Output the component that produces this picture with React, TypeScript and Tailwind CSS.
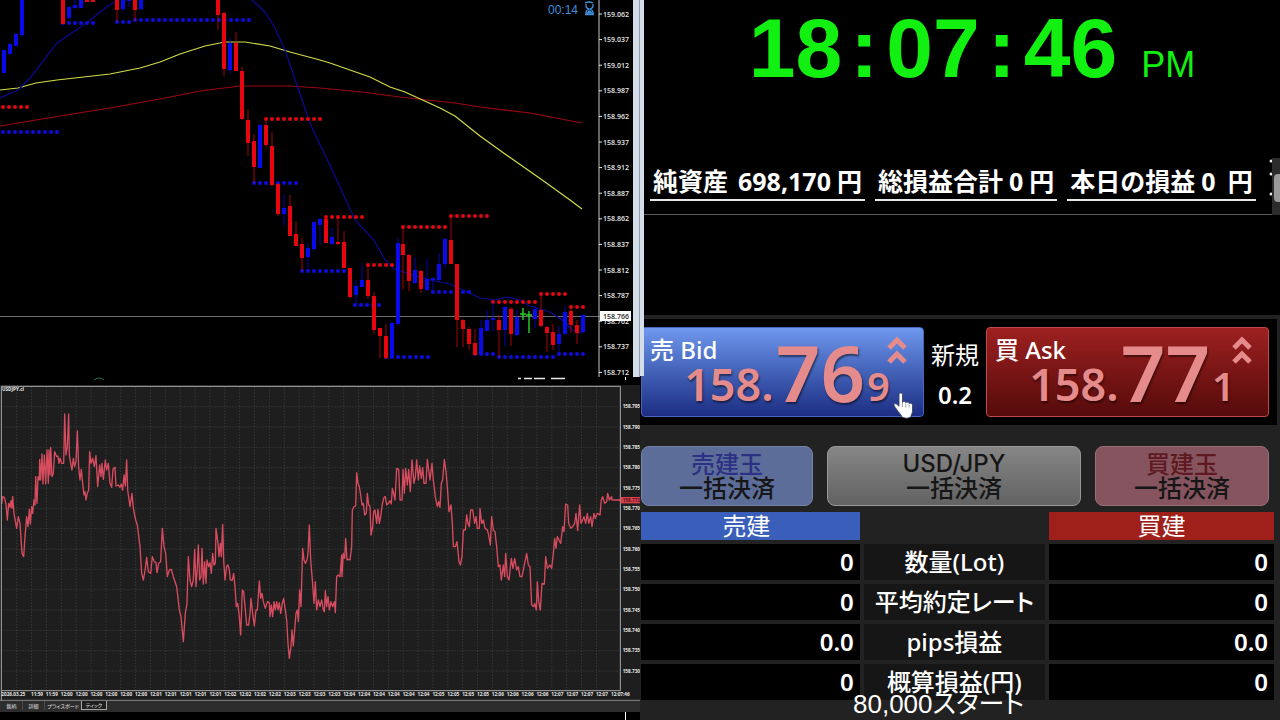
import type { ReactNode } from 'react'
import clsx from 'clsx'

// x, body top, body bottom, wick top, wick bottom
type Candle = [number, number, number, number, number]

const UP: Candle[] = [
  [4, 50, 73, 50, 73], [10, 44, 54, 43, 55], [16, 34, 46, 33, 46], [22, 0, 35, 0, 37],
  [69, 7, 18, 6, 19], [75, 5, 8, 0, 9], [81, 0, 8, 0, 8], [123, 0, 9, 0, 11], [129, 0, 1, 0, 7],
  [141, 0, 9, 0, 10], [230, 43, 70, 38, 74], [260, 125, 168, 124, 168], [284, 208, 214, 195, 226],
  [308, 248, 257, 242, 270], [314, 222, 249, 221, 250], [320, 219, 225, 218, 245],
  [332, 237, 244, 228, 245], [356, 286, 295, 280, 305], [362, 280, 287, 263, 287],
  [392, 323, 358, 322, 358], [398, 243, 324, 238, 326], [415, 270, 283, 257, 284],
  [427, 279, 290, 259, 291], [433, 278, 280, 277, 290], [439, 264, 280, 253, 282],
  [445, 239, 264, 238, 268], [481, 328, 355, 320, 356], [487, 320, 331, 310, 331],
  [493, 318, 320, 302, 331], [505, 307, 330, 306, 346], [517, 317, 335, 310, 336],
  [535, 309, 319, 306, 328], [559, 334, 344, 326, 353], [565, 312, 334, 306, 335],
  [583, 315, 332, 314, 333],
]

const DOWN: Candle[] = [
  [63, 0, 24, 0, 24], [87, 0, 2, 0, 2], [93, 0, 2, 0, 2], [117, 0, 10, 0, 22], [135, 0, 10, 0, 21],
  [218, 0, 15, 0, 30], [224, 13, 69, 12, 76], [236, 43, 71, 32, 71], [242, 71, 119, 67, 120],
  [248, 120, 143, 109, 156], [254, 141, 167, 134, 183], [266, 125, 145, 119, 147],
  [272, 146, 185, 132, 186], [278, 184, 214, 183, 216], [290, 206, 236, 195, 236],
  [296, 234, 246, 221, 246], [302, 244, 258, 238, 271], [326, 219, 243, 217, 243],
  [338, 242, 244, 217, 245], [344, 242, 268, 231, 268], [350, 268, 297, 268, 298],
  [368, 280, 296, 265, 299], [374, 296, 330, 292, 333], [380, 328, 336, 328, 358],
  [386, 336, 358, 324, 359], [403, 244, 255, 227, 289], [409, 255, 281, 254, 291],
  [421, 271, 289, 270, 293], [451, 240, 264, 216, 264], [457, 264, 320, 264, 347],
  [463, 320, 329, 319, 347], [469, 329, 344, 327, 350], [475, 343, 355, 329, 356],
  [499, 320, 330, 315, 357], [511, 309, 334, 307, 346], [541, 310, 326, 295, 327],
  [547, 327, 333, 326, 352], [553, 332, 345, 324, 350], [571, 311, 325, 309, 333],
  [577, 325, 333, 320, 344],
]

// first x, last x, y
type DotRow = [number, number, number]

const RESISTANCE: DotRow[] = [
  [3, 27, 107], [266, 320, 119], [326, 362, 217], [368, 392, 265], [403, 445, 227], [451, 487, 216],
  [493, 535, 302], [541, 565, 294], [571, 583, 307],
]

const SUPPORT: DotRow[] = [
  [3, 57, 132], [63, 93, 23], [117, 129, 22], [135, 249, 20], [254, 296, 183], [302, 344, 271],
  [355, 379, 305], [386, 428, 357], [433, 469, 292], [475, 493, 354], [499, 553, 357], [559, 583, 354],
]

const PRICES = [
  '159.062', '159.037', '159.012', '158.987', '158.962', '158.937', '158.912', '158.887',
  '158.862', '158.837', '158.812', '158.787', '158.762', '158.737', '158.712',
]

const TICKS =
  '5,372 8,350 13,352 18,372 22,420 26,370 30,382 33,362 36,385 38,350 42,400 50,445 55,410 60,430 66,520 71,530 75,470 80,410 84,440 88,388 91,432 95,380 98,400 102,360 105,375 107,290 111,370 114,290 118,300 119,238 122,300 126,222 129,312 133,225 137,312 141,210 145,310 147,210 150,285 152,202 156,290 160,280 164,215 170,230 174,228 177,250 180,235 185,250 191,250 194,102 198,225 202,200 206,102 208,225 212,250 216,270 220,235 224,260 228,245 232,153 236,262 240,300 244,268 248,310 252,345 255,335 258,360 262,340 266,330 269,215 273,250 278,235 283,260 288,227 293,320 299,255 303,290 306,250 310,298 316,240 320,270 325,250 330,310 335,322 339,268 345,262 348,318 355,315 360,322 364,312 368,330 372,285 376,318 380,240 383,330 390,380 396,340 400,385 407,420 412,435 420,500 425,580 430,600 435,572 440,532 445,575 452,580 457,530 463,545 468,548 471,578 476,550 482,545 487,445 492,500 497,520 502,590 508,570 514,568 520,590 530,620 538,690 543,710 550,785 556,700 561,670 565,530 570,600 575,620 580,600 584,508 588,620 592,560 595,495 599,600 603,590 606,505 610,612 614,545 618,610 621,540 626,560 630,548 634,580 638,520 642,555 646,550 648,445 654,490 657,530 661,490 664,530 668,433 671,540 675,600 680,558 684,555 688,570 691,600 697,600 701,580 705,620 709,680 713,670 718,710 722,765 727,630 731,635 736,690 740,735 746,735 750,700 753,655 758,700 763,738 768,690 772,690 778,603 782,655 786,640 790,665 796,685 802,665 808,668 810,710 814,675 818,710 822,665 826,690 830,665 834,690 838,668 842,700 847,670 851,655 856,690 860,720 864,790 868,835 873,800 876,750 880,798 884,750 888,700 892,690 895,725 899,630 903,680 908,505 912,540 916,550 921,540 924,520 928,435 932,540 937,600 942,670 946,605 950,690 955,660 960,680 ' +
  '965,660 970,690 973,695 976,632 980,680 984,650 988,690 993,665 998,680 1003,665 1006,698 1010,590 1014,585 1020,590 1025,525 1026,590 1030,520 1034,535 1037,475 1041,540 1046,538 1050,540 1055,500 1057,390 1062,380 1067,378 1070,278 1074,310 1078,320 1082,345 1086,375 1090,370 1094,405 1099,400 1102,340 1106,375 1110,378 1113,465 1118,440 1121,395 1125,390 1130,430 1134,388 1138,430 1142,410 1147,372 1152,352 1156,350 1160,375 1165,370 1170,362 1174,372 1177,325 1181,340 1185,360 1190,265 1196,268 1200,360 1206,360 1209,268 1213,340 1217,265 1222,315 1226,268 1231,335 1236,240 1242,310 1246,290 1250,240 1255,300 1259,258 1264,295 1268,262 1272,310 1278,310 1282,238 1286,270 1290,300 1296,250 1300,300 1306,350 1312,380 1316,365 1320,382 1324,310 1328,300 1333,238 1338,275 1342,320 1347,395 1353,375 1357,430 1360,500 1366,500 1371,485 1377,545 1381,555 1386,530 1390,450 1396,450 1400,405 1404,430 1408,440 1412,390 1418,390 1424,430 1428,410 1432,445 1438,445 1440,385 1445,430 1450,420 1455,445 1462,450 1466,465 1471,495 1475,410 1480,450 1485,455 1490,500 1495,560 1500,555 1504,600 1510,555 1514,590 1517,520 1522,590 1527,600 1534,535 1539,565 1544,535 1550,570 1555,560 1560,590 1566,590 1572,560 1580,520 1585,555 1590,560 1595,675 1601,680 1604,670 1609,690 1612,605 1616,665 1621,690 1626,610 1633,612 1637,530 1642,565 1650,555 1655,565 1660,520 1664,475 1668,505 1672,470 1677,480 1682,490 1688,440 1692,455 1697,372 1703,375 1706,430 1712,445 1718,440 1724,430 1728,400 1733,452 1739,375 1743,430 1748,420 1752,410 1757,430 1762,400 1766,430 1772,410 1776,440 1782,400 1786,415 1792,400 1800,405 1804,360 1808,350 1814,370 1820,365 1823,340 1828,360 1835,350 1836,360 1862,360'

const TICK_PRICES = [
  '158.795', '158.790', '158.785', '158.780', '158.775', '158.770', '158.765', '158.760',
  '158.755', '158.750', '158.745', '158.740', '158.735', '158.730',
]

const TICK_TIMES = [
  '11:59', '11:59', '12:00', '12:00', '12:00', '12:00', '12:00', '12:00', '12:01', '12:01',
  '12:01', '12:01', '12:01', '12:02', '12:02', '12:02', '12:02', '12:03', '12:03', '12:03',
  '12:03', '12:04', '12:04', '12:04', '12:04', '12:04', '12:04', '12:05', '12:05', '12:05',
  '12:05', '12:06', '12:06', '12:06', '12:06', '12:07', '12:07', '12:07', '12:07',
]

const TABS = [
  { label: '銘柄', className: 'w-[22px] border-r border-[#4a4a4a]' },
  { label: '詳細', className: 'w-[22px] border-r border-[#4a4a4a]' },
  { label: 'プライスボード', className: 'w-9' },
  { label: 'ティック', className: 'w-[26px] border border-t-0 border-[#a8a8a8] bg-[#1e1e1e]' },
]

const ROWS = [
  { label: '数量(Lot)', sell: '0', buy: '0' },
  { label: '平均約定レート', sell: '0', buy: '0' },
  { label: 'pips損益', sell: '0.0', buy: '0.0' },
  { label: '概算損益(円)', sell: '0', buy: '0' },
]

function Candles({ data, color }: { data: Candle[]; color: string }) {
  return (
    <g fill={color}>
      {data.map(([x, top, bottom, wickTop, wickBottom]) => (
        <g key={x}>
          <rect x={x - 0.5} y={wickTop} width={1} height={wickBottom - wickTop} opacity={0.7} />
          <rect x={x - 2} y={top} width={4} height={bottom - top} />
        </g>
      ))}
    </g>
  )
}

function Dots({ rows, color }: { rows: DotRow[]; color: string }) {
  return (
    <g stroke={color} strokeWidth={4} strokeLinecap="round" strokeDasharray="0 6">
      {rows.map(([from, to, y]) => (
        <line key={`${from}-${y}`} x1={from} x2={to + 1} y1={y} y2={y} />
      ))}
    </g>
  )
}

function CandleChart() {
  return (
    <svg viewBox="0 0 640 380" className="block h-auto w-full bg-black" fill="none">
      <line x1={0} x2={600} y1={316.5} y2={316.5} stroke="#6b6f6b" />
      <polyline
        stroke="#9c0612"
        strokeWidth={1.2}
        points="0,126 60,116 110,108 160,99 200,91 240,86 290,86 320,88 362,92 400,97 455,103 480,107 530,113 582,123"
      />
      <polyline
        stroke="#d3dc4a"
        strokeWidth={1.2}
        points="0,90 18,88 36,83 57,80 110,74 140,68 160,62 180,54 205,46 225,42 245,42 270,46 290,52 320,60 330,63 370,77 390,87 405,92 440,108 455,116 480,136 505,154 545,182 570,200 582,209"
      />
      <g stroke="#0c0a96" strokeWidth={1.2}>
        <polyline points="0,98 18,90 30,78 57,43 85,24 108,6 118,0" />
        <polyline points="252,0 265,12 275,28 285,50 297,85 310,123 320,145 327,159 340,187 355,220 374,240 385,260 394,269 407,273 430,280 450,284 465,291 480,298 495,300 507,297 520,300 530,306 550,312 565,322 572,330 582,333" />
      </g>
      <Dots rows={RESISTANCE} color="#e30613" />
      <Dots rows={SUPPORT} color="#0d0de0" />
      <Candles data={UP} color="#0a0aec" />
      <Candles data={DOWN} color="#e6060f" />
      <path d="M523 308v12M520 314h6M529 311v22M526 315h6" stroke="#27d427" strokeWidth={1.4} />

      <path d="M94 380q5-4 10 0" stroke="#1f7a4a" />
      <path d="M518 378.5h3M524 378.5h8M534 378.5h11M551 378.5h14" stroke="#e8e8e8" strokeWidth={1.5} />

      <text x={548} y={14} fill="#3f8fdc" fontSize={12} fontFamily="Liberation Sans, sans-serif">
        00:14
      </text>
      <g stroke="#3f8fdc" strokeWidth={1.3}>
        <path d="M585 3q4-2 8 0M585 14.500h9M586 4v2q0 2 3 3q-3 1-3 4v1M593 4v2q0 2-3 3q3 1 3 4v1" />
        <path d="M587 13h5l-2-2h-1z" fill="#3f8fdc" />
      </g>

      <line x1={599} x2={599} y1={0} y2={377} stroke="#c8c8c8" />
      <g fill="#e6e6e6" fontSize={7} fontWeight={600} fontFamily="Open Sans, sans-serif">
        {PRICES.map((price, i) => (
          <g key={price}>
            <rect x={599} y={13.5 + i * 25.6} width={3} height={1} />
            <text x={603} y={16.5 + i * 25.6}>{price}</text>
          </g>
        ))}
        <rect x={600} y={311} width={31} height={10} fill="#fff" />
        <text x={603} y={319} fill="#222">158.766</text>
      </g>

      <rect x={633} y={0} width={7} height={377} fill="#d3deea" />
      <rect x={639} y={0} width={1} height={377} fill="#8f9bab" />
      <rect x={625} y={377} width={1} height={3} fill="#fff" />
    </svg>
  )
}

// Drawn at three units to the pixel, as the tick series needs the finer steps.
function TickChart() {
  return (
    <svg viewBox="0 15 1920 948" className="block h-auto w-full bg-[#1e1e1e]" fill="none">
      <g stroke="#454a4a" strokeWidth={2} strokeDasharray="4 5">
        {TICK_PRICES.map((price, i) => (
          <line key={price} x1={4} x2={1860} y1={80 + i * 61} y2={80 + i * 61} />
        ))}
        {TICK_TIMES.concat('end').map((_, i) => (
          <line key={i} x1={50 + i * 44.6} x2={50 + i * 44.6} y1={20} y2={930} />
        ))}
      </g>
      <polyline points={TICKS} stroke="#d84c60" strokeWidth={4} strokeLinejoin="round" />
      <path d="M4 963V19H1861V932H4" stroke="#a8a8a8" strokeWidth={3} />
      <line x1={0} x2={1920} y1={961} y2={961} stroke="#8a8a8a" strokeWidth={3} />
      <g fill="#e6e6e6" fontSize={14} fontWeight={700} fontFamily="Open Sans, sans-serif">
        <text x={6} y={34}>USDJPY.cl</text>
        {TICK_PRICES.map((price, i) => (
          <text key={price} x={1868} y={85 + i * 61}>{price}</text>
        ))}
        <text x={4} y={949}>2026.03.25</text>
        {TICK_TIMES.map((time, i) => (
          <text key={i} x={93 + i * 44.6} y={949}>{time}</text>
        ))}
        <text x={1833} y={949}>12:07:46</text>
        <rect x={1862} y={351} width={58} height={19} fill="#d9404f" />
        <text x={1868} y={366} fill="#5a1018">158.772</text>
      </g>
    </svg>
  )
}

function Chevrons() {
  return (
    <svg viewBox="0 0 20 28" className="h-7 w-5 self-end" fill="none" stroke="#e58b8b" strokeWidth={5}>
      <path d="M2 12l8-8l8 8M2 26l8-8l8 8" />
    </svg>
  )
}

type PriceProps = { name: string; major: string; pips: string; point: string; className: string; children?: ReactNode }

function PriceButton({ name, major, pips, point, className, children }: PriceProps) {
  return (
    <button
      type="button"
      className={clsx('relative flex min-w-0 flex-1 items-end gap-0.5 rounded border pt-2 pr-4 pb-3.5 pl-2', className)}
    >
      <span className="flex flex-1 flex-col gap-1 text-left">
        <span className="text-[24px] leading-6 font-medium text-white">{name}</span>
        <span className="text-right text-[45px] leading-9 font-semibold text-[#e58b8b] [text-shadow:1px_2px_2px_rgba(0,0,0,0.5)]">
          {major}
        </span>
      </span>
      <span className="text-[78px] leading-[60px] font-semibold text-[#e58b8b] [text-shadow:1px_2px_2px_rgba(0,0,0,0.5)]">
        {pips}
      </span>
      <span className="flex w-10 flex-col gap-1.5 text-left">
        <Chevrons />
        <span className="text-[40px] leading-8 font-semibold text-[#e58b8b] [text-shadow:1px_2px_2px_rgba(0,0,0,0.5)]">
          {point}
        </span>
      </span>
      {children}
    </button>
  )
}

function HandCursor() {
  return (
    <svg viewBox="0 0 22 28" className="absolute right-2 -bottom-1 h-7 w-[22px]">
      <path
        d="M6 2.500c0-2 3.500-2 3.500 0v8c.5-1.500 3-1.500 3.300.3c.7-1.200 3-.9 3.300.8c.9-1 3.400-.6 3.400 1.600v6c0 2-1.500 3.500-1.700 5.800q-4 2.500-9 0c-.3-2.500-3-4-5-7.500c-1-1.500-2.300-2.700-2.800-4c-.5-1.700 1.500-2.600 3-1.200l2 2z"
        fill="#fff"
        stroke="#333a55"
        strokeWidth={0.8}
      />
      <path d="M9.500 11v4M12.800 11.500v4M16.100 12.500v3" stroke="#8a8fa5" strokeWidth={0.8} />
    </svg>
  )
}

function Summary({ label, value, className }: { label: string; value: string; className?: string }) {
  return (
    <div className="flex gap-1.5 border-b-2 border-[#e8e8e8] px-[3px] text-[25px] leading-9 font-bold whitespace-nowrap">
      <dt>{label}</dt>
      <dd className={clsx('flex', className)}>
        <span>{value}</span>
        <span>円</span>
      </dd>
    </div>
  )
}

export default function App() {
  return (
    <div className="grid min-h-screen grid-cols-2 items-start overflow-hidden bg-black font-['Noto_Sans','Noto_Sans_CJK_JP',sans-serif] text-white">
      <section>
        <CandleChart />
        <div className="h-[5px]" />
        <TickChart />
        <nav className="flex h-[11px] bg-[#2d2d2d] pl-px text-[5px] leading-[8px] text-[#e0e0e0]">
          {TABS.map(tab => (
            <button
              key={tab.label}
              type="button"
              className={clsx(
                "h-[9px] font-['Noto_Sans_CJK_JP',sans-serif] whitespace-nowrap [font-feature-settings:'palt']",
                tab.className,
              )}
            >
              {tab.label}
            </button>
          ))}
        </nav>
        <div className="flex h-2 justify-end pr-[14px]">
          <div className="w-px bg-white" />
        </div>
      </section>

      <section className="relative flex min-h-screen flex-col overflow-hidden">
        <time className="flex items-baseline justify-center pt-[18px] pb-20 pl-6 font-['Liberation_Sans',sans-serif] text-[84px] leading-[60px] font-bold text-[#12f012]">
          <span>18</span>
          <span className="px-2">:</span>
          <span>07</span>
          <span className="px-2">:</span>
          <span>46</span>
          <span className="pl-6 text-[36px] leading-9 font-normal">PM</span>
        </time>

        <dl className="flex gap-2.5 border-b border-[#5a5a5a] pb-[13px] pl-2.5">
          <Summary label="純資産" value="698,170" className="gap-1.5 pl-1" />
          <Summary label="総損益合計" value="0" className="gap-1.5" />
          <Summary label="本日の損益" value="0" className="gap-3" />
        </dl>
        <div className="h-[100px]" />

        <div className="flex-1 bg-[#222222] pt-1">
          <div className="mr-[3px] flex bg-black py-2 pr-2 pl-px">
            <PriceButton
              name="売 Bid"
              major="158."
              pips="76"
              point="9"
              className="border-[#4468bd] bg-linear-to-b from-[#6f98ee] to-[#1d2d83]"
            >
              <HandCursor />
            </PriceButton>
            <div className="flex w-[62px] flex-col items-center pt-2">
              <label htmlFor="lot" className="text-[24px] leading-10">新規</label>
              <input
                id="lot"
                defaultValue="0.2"
                className="w-full bg-transparent text-center text-[24px] leading-10 font-semibold outline-none"
              />
            </div>
            <PriceButton
              name="買 Ask"
              major="158."
              pips="77"
              point="1"
              className="border-[#c04a4a] bg-linear-to-b from-[#9e2020] to-[#560b0b]"
            />
          </div>

          <div className="mt-[21px] mr-[11px] ml-px flex gap-3.5 text-[24px] leading-6 font-medium text-[#161616]">
            <button type="button" className="h-[60px] w-[172px] rounded-lg border border-[#7482a6] bg-[#5d6d99]">
              <span className="block text-[#2c3184]">売建玉</span>
              一括決済
            </button>
            <button
              type="button"
              className="h-[60px] flex-1 rounded-lg border border-[#999999] bg-linear-to-b from-[#868686] to-[#626262]"
            >
              <span className="block font-['Inter',sans-serif]">USD/JPY</span>
              一括決済
            </button>
            <button type="button" className="h-[60px] w-[174px] rounded-lg border border-[#96707a] bg-[#85545f]">
              <span className="block text-[#5e1a20]">買建玉</span>
              一括決済
            </button>
          </div>

          <div className="mt-0.5 mr-0.5 -ml-[3px]">
            <table className="w-full table-fixed border-separate border-spacing-1 text-[24px]">
              <thead>
                <tr className="h-7 leading-7">
                  <th className="w-[35%] bg-[#3a5fba] p-0 pr-2 font-normal">売建</th>
                  <td className="w-[29%] p-0" />
                  <th className="bg-[#9f1f1b] p-0 font-normal">買建</th>
                </tr>
              </thead>
              <tbody>
                {ROWS.map(row => (
                  <tr key={row.label} className="h-9 leading-9">
                    <td className="bg-black p-0 pr-1.5 text-right font-semibold">{row.sell}</td>
                    <th
                      scope="row"
                      className="bg-[#161616] p-0 font-medium whitespace-nowrap [font-feature-settings:'palt']"
                    >
                      {row.label}
                    </th>
                    <td className="bg-black p-0 pr-1.5 text-right font-semibold">{row.buy}</td>
                  </tr>
                ))}
              </tbody>
            </table>
          </div>
        </div>

        {/* edge of the window behind, and the scrollbar on the right */}
        <div className="absolute top-0 left-0 h-[376px] w-1 bg-[#d3deea]" />
        <div className="absolute top-[158px] right-0 h-[57px] w-2 bg-[#2c2c2c] pt-4">
          <div className="ml-0.5 h-7 rounded-l bg-[#9a9a9a]" />
        </div>
        <svg viewBox="0 0 3 40" className="absolute top-[158px] right-2 h-10 w-[3px]" fill="#e8e8e8">
          <circle cx={2} cy={3} r={1.5} />
          <circle cx={2} cy={16} r={1.5} />
          <circle cx={2} cy={36} r={1.5} />
        </svg>
        <p className="absolute bottom-0.5 left-[213px] font-['Liberation_Sans','Noto_Sans_CJK_JP',sans-serif] text-[26px] leading-7 whitespace-nowrap [font-feature-settings:'palt']">
          80,000スタート
        </p>
      </section>
    </div>
  )
}
